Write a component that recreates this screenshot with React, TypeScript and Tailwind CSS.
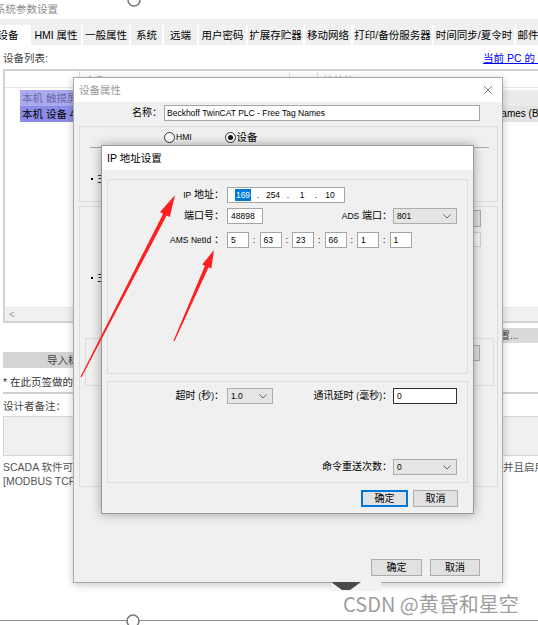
import React from "react";

const F = "font-['Liberation_Sans','Noto_Sans_CJK_SC',sans-serif]";

const TABS = [
  { t: "设备", w: "w-[42px]", sel: true },
  { t: "HMI 属性", w: "w-[52px]" },
  { t: "一般属性", w: "w-[48px]" },
  { t: "系统", w: "w-[33px]" },
  { t: "远端", w: "w-[35px]" },
  { t: "用户密码", w: "w-[49px]" },
  { t: "扩展存贮器", w: "w-[57px]" },
  { t: "移动网络", w: "w-[48px]" },
  { t: "打印/备份服务器", w: "w-[81px]" },
  { t: "时间同步/夏令时", w: "w-[82px]" },
  { t: "邮件", w: "w-[26px]" },
];

function Chevron() {
  return (
    <svg width="8" height="5" viewBox="0 0 8 5" className="shrink-0">
      <path d="M0.5 0.5 L4 4 L7.5 0.5" fill="none" stroke="#666" strokeWidth="1" />
    </svg>
  );
}

function Combo({ value, w }: { value: string; w: string }) {
  return (
    <div
      className={`${w} h-[16px] shrink-0 flex items-center justify-between border border-[#adadad] bg-[#e5e5e5] pl-[3px] pr-[5px] text-[8.5px] leading-none`}
    >
      <span>{value}</span>
      <Chevron />
    </div>
  );
}

function TextBox({ value, w, dark }: { value: string; w: string; dark?: boolean }) {
  return (
    <div
      className={`${w} h-[16px] shrink-0 flex items-center bg-white pl-[3px] text-[8.5px] leading-none ${
        dark ? "border border-[#333]" : "border border-[#a5a5a5]"
      }`}
    >
      {value}
    </div>
  );
}

function Btn({ label, focus, w }: { label: string; focus?: boolean; w: string }) {
  return (
    <div
      className={`${w} h-[17px] flex items-center justify-center bg-[#e1e1e1] text-[10px] leading-none ${
        focus ? "border-2 border-[#0078d7]" : "border border-[#adadad]"
      }`}
    >
      {label}
    </div>
  );
}

function Background() {
  return (
    <div className="flex flex-col">
      <div className="h-[19px] -ml-[5px] flex items-center text-[10.5px] text-[#8c8c8c] leading-none">
        系统参数设置
      </div>
      <div className="h-[26px] bg-[#f0f0f0] flex items-end overflow-hidden">
        <div className="flex -ml-[13px] shrink-0">
          {TABS.map((t) => (
            <div
              key={t.t}
              className={`${t.w} h-[20px] shrink-0 flex items-center justify-center text-[10.5px] leading-none whitespace-nowrap ${
                t.sel ? "bg-white" : "bg-[#f0f0f0] border-l-2 border-white"
              }`}
            >
              {t.t}
            </div>
          ))}
        </div>
      </div>
      <div className="pl-[3px] flex flex-col">
        <div className="h-[24px] pt-[3px] grid grid-cols-[480px_auto] items-center text-[10.5px] leading-none">
          <span className="text-[#444]">设备列表:</span>
          <span className="text-[#0000ff] underline whitespace-nowrap">当前 PC 的 IP 地址</span>
        </div>
        <div className="w-[560px] h-[254px] border-2 border-[#d2d2d2] flex flex-col">
          <div className="h-[17px] flex text-[10px] leading-none text-[#777] border-b border-[#e5e5e5]">
            <div className="w-[75px] shrink-0 border-r border-[#e0e0e0]" />
            <div className="w-[210px] shrink-0 border-r border-[#e0e0e0] pl-[6px] pt-[6px]">名称</div>
            <div className="w-[28px] shrink-0 border-r border-[#e0e0e0] pl-[4px] pt-[6px]">No.</div>
            <div className="flex-1 pl-[6px] pt-[6px]">连接端口</div>
          </div>
          <div className="mt-[2px] h-[16px] flex text-[10.5px] leading-none">
            <div className="w-[15px] shrink-0" />
            <div className="w-[60px] shrink-0 bg-[#aaaaf0] text-[#6a6aa8] pl-[2px] flex items-center whitespace-nowrap">
              本机 触摸屏
            </div>
            <div className="flex-1 bg-[#ebebeb]" />
          </div>
          <div className="h-[16px] flex text-[10.5px] leading-none">
            <div className="w-[15px] shrink-0" />
            <div className="w-[60px] shrink-0 bg-[#8c8ce8] pl-[2px] flex items-center whitespace-nowrap overflow-hidden">
              本机 设备 4
            </div>
            <div className="w-[238px] shrink-0 bg-[#e3e3e3]" />
            <div className="flex-1 min-w-0 overflow-hidden bg-[#e3e3e3] pl-[22px] flex items-center text-[10px] whitespace-nowrap">
              Beckhoff TwinCAT PLC - Free Tag Names (Beckhoff)
            </div>
          </div>
          <div className="flex-1" />
          <div className="h-[14px] bg-[#f0f0f0] border-t border-[#e6e6e6] flex items-center pl-[4px] text-[10px] text-[#a0a0a0] leading-none">
            &lt;
          </div>
        </div>
        <div className="mt-[5px] ml-[437px] w-[140px] h-[15px] bg-[#dadada] pl-[50px] text-[10px] text-[#444] flex items-center whitespace-nowrap leading-none">
          设置...
        </div>
        <div className="mt-[9px] w-[260px] h-[16px] bg-[#d4d4d4] pl-[44px] text-[10.5px] text-[#444] flex items-center leading-none">
          导入标签
        </div>
        <div className="mt-[7px] h-[14px] flex items-center text-[10.5px] text-[#333] whitespace-nowrap leading-none">
          * 在此页签做的修改仅对当前设备有效
        </div>
        <div className="mt-[3px] h-[2px] w-[560px] bg-[#d0d0d0]" />
        <div className="mt-[5px] h-[14px] flex items-center text-[10.5px] text-[#444] leading-none">
          设计者备注：
        </div>
        <div className="mt-[3px] h-[40px] w-[560px] border border-[#d4d4d4] bg-[#f0f0f0]" />
        <div className="mt-[4px] h-[14px] grid grid-cols-[500px_auto] items-center text-[10.5px] text-[#555] leading-none whitespace-nowrap">
          <span className="overflow-hidden">SCADA 软件可以通过 MODBUS 协议读取本机数据，</span>
          <span>并且启用</span>
        </div>
        <div className="h-[14px] flex items-center text-[10.5px] text-[#555] leading-none whitespace-nowrap">
          [MODBUS TCP/IP] 服务器
        </div>
      </div>
    </div>
  );
}

function Radio({ on }: { on?: boolean }) {
  return (
    <div className="w-[11px] h-[11px] rounded-full border border-[#333] bg-white flex items-center justify-center shrink-0">
      {on && <div className="w-[5px] h-[5px] rounded-full bg-[#111]" />}
    </div>
  );
}

function DeviceDialog() {
  return (
    <div className="absolute left-[73px] top-[77px] w-[430px] h-[506px] flex flex-col border border-[#a8a8a8] bg-[#f0f0f0] shadow-[0_2px_8px_rgba(0,0,0,0.22)]">
      <div className="h-[24px] bg-white flex items-center justify-between pl-[5px] pr-[9px]">
        <span className="text-[10.5px] text-[#999] leading-none">设备属性</span>
        <svg width="10" height="10" viewBox="0 0 10 10">
          <path d="M1 1 L9 9 M9 1 L1 9" stroke="#777" strokeWidth="1" />
        </svg>
      </div>
      <div className="flex-1 flex flex-col">
        <div className="mt-[3px] flex items-center h-[16px]">
          <div className="w-[88px] text-right text-[10px] leading-none">名称：</div>
          <div className="ml-[2px] w-[316px] h-[16px] border border-[#a5a5a5] bg-white pl-[2px] flex items-center text-[8.5px] leading-none whitespace-nowrap">
            Beckhoff TwinCAT PLC - Free Tag Names
          </div>
        </div>
        <div className="mt-[5px] ml-[5px] w-[419px] h-[76px] border border-[#dcdcdc] flex flex-col">
          <div className="mt-[4px] h-[12px] flex items-center text-[10.5px] leading-none">
            <div className="ml-[84px]">
              <Radio />
            </div>
            <span className="ml-[1px] text-[8.5px]">HMI</span>
            <div className="ml-[33px]">
              <Radio on />
            </div>
            <span className="ml-[1px]">设备</span>
          </div>
          <div className="mt-[4px] ml-[10px] mr-[8px] h-[1px] bg-[#a8a8a8]" />
          <div className="mt-[26px] ml-[11px] flex items-center text-[10px] leading-none">
            <div className="w-[2px] h-[2px] bg-black" />
            <span className="ml-[4px]">主</span>
          </div>
        </div>
        <div className="mt-[4px] ml-[5px] w-[419px] h-[281px] border border-[#dcdcdc] flex flex-col">
          <div className="mt-[3px] mr-[16px] self-end w-[100px] h-[17px] border border-[#adadad] bg-[#e1e1e1]" />
          <div className="mt-[5px] mr-[16px] self-end w-[100px] h-[15px] border border-[#d0d0d0] bg-[#f7f7f7]" />
          <div className="mt-[26px] ml-[11px] flex items-center text-[10px] leading-none">
            <div className="w-[2px] h-[2px] bg-black" />
            <span className="ml-[4px]">主</span>
          </div>
          <div className="mt-[55px] ml-[5px] mr-[3px] h-[48px] border border-[#dcdcdc] flex items-start justify-end">
            <div className="mt-[6px] mr-[13px] w-[60px] h-[16px] border border-[#adadad] bg-[#e1e1e1]" />
          </div>
        </div>
        <div className="mt-[72px] flex justify-end gap-[8px] pr-[22px]">
          <Btn label="确定" w="w-[51px]" />
          <Btn label="取消" w="w-[50px]" />
        </div>
      </div>
    </div>
  );
}

function Lat({ children }: { children: React.ReactNode }) {
  return <span className="text-[8.5px]">{children}</span>;
}

function IpDialog() {
  const ams = ["5", "63", "23", "66", "1", "1"];
  return (
    <div className="absolute left-[101px] top-[145px] w-[373px] h-[369px] flex flex-col border border-[#9a9a9a] bg-[#f0f0f0] shadow-[0_0_10px_rgba(0,0,0,0.35)]">
      <div className="h-[24px] bg-white pl-[5px] flex items-center text-[10.5px] leading-none">IP 地址设置</div>
      <div className="flex-1 px-[5px] pt-[9px] flex flex-col text-[10px] leading-none">
        <div className="h-[195px] border border-[#dcdcdc] pt-[7px] pr-[10px] flex flex-col">
          <div className="h-[16px] flex items-center">
            <div className="w-[117px] text-right pr-[1px]">
              <Lat>IP</Lat> 地址：
            </div>
            <div className="ml-[2px] w-[118px] h-[16px] border border-[#a5a5a5] bg-white flex items-center text-[8.5px] pl-[3px]">
              <div className="w-[24px] flex justify-center">
                <span className="bg-[#0078d7] text-white px-[1px] py-[2px]">169</span>
              </div>
              <div className="w-[6px] text-center">.</div>
              <div className="w-[24px] text-center">254</div>
              <div className="w-[6px] text-center">.</div>
              <div className="w-[22px] text-center">1</div>
              <div className="w-[6px] text-center">.</div>
              <div className="w-[22px] text-center">10</div>
            </div>
          </div>
          <div className="mt-[5px] h-[16px] flex items-center">
            <div className="w-[117px] text-right pr-[1px]">端口号：</div>
            <div className="ml-[2px]">
              <TextBox value="48898" w="w-[36px]" />
            </div>
            <div className="ml-auto pr-[1px]">
              <Lat>ADS</Lat> 端口：
            </div>
            <Combo value="801" w="w-[64px]" />
          </div>
          <div className="mt-[8px] h-[16px] flex items-center">
            <div className="w-[117px] text-right pr-[1px]">
              <Lat>AMS NetId</Lat> ：
            </div>
            <div className="ml-[2px] flex items-center">
              {ams.map((v, i) => (
                <React.Fragment key={i}>
                  {i > 0 && <div className="w-[10.5px] text-center text-[8.5px]">:</div>}
                  <TextBox value={v} w="w-[22px]" />
                </React.Fragment>
              ))}
            </div>
          </div>
        </div>
        <div className="mt-[7px] h-[102px] border border-[#dcdcdc] pt-[6px] pr-[10px] flex flex-col">
          <div className="h-[16px] flex items-center">
            <div className="w-[117px] text-right pr-[1px]">
              超时 <Lat>(</Lat>秒<Lat>)</Lat>：
            </div>
            <div className="ml-[2px]">
              <Combo value="1.0" w="w-[46px]" />
            </div>
            <div className="ml-auto pr-[1px]">
              通讯延时 <Lat>(</Lat>毫秒<Lat>)</Lat>：
            </div>
            <TextBox value="0" w="w-[64px]" dark />
          </div>
          <div className="mt-[55px] h-[16px] flex items-center justify-end">
            <div className="pr-[1px]">命令重送次数：</div>
            <Combo value="0" w="w-[64px]" />
          </div>
        </div>
        <div className="mt-[7px] flex justify-end gap-[5px] pr-[10px]">
          <Btn label="确定" w="w-[47px]" focus />
          <Btn label="取消" w="w-[45px]" />
        </div>
      </div>
    </div>
  );
}

function arrowPoints(t: [number, number], p: [number, number], hl: number, hw: number) {
  const dx = p[0] - t[0];
  const dy = p[1] - t[1];
  const L = Math.hypot(dx, dy);
  const ux = dx / L;
  const uy = dy / L;
  const nx = -uy;
  const ny = ux;
  const w0 = 1.2;
  const w1 = 4;
  const bx = p[0] - ux * hl;
  const by = p[1] - uy * hl;
  const pts: [number, number][] = [
    [t[0] + (nx * w0) / 2, t[1] + (ny * w0) / 2],
    [bx + (nx * w1) / 2, by + (ny * w1) / 2],
    [bx + (nx * hw) / 2, by + (ny * hw) / 2],
    p,
    [bx - (nx * hw) / 2, by - (ny * hw) / 2],
    [bx - (nx * w1) / 2, by - (ny * w1) / 2],
    [t[0] - (nx * w0) / 2, t[1] - (ny * w0) / 2],
  ];
  return pts.map((q) => q.join(",")).join(" ");
}

function Overlay() {
  return (
    <>
      <svg className="absolute left-0 top-0 pointer-events-none" width="538" height="625" viewBox="0 0 538 625">
        <circle cx="134" cy="0" r="6" fill="#fff" stroke="#777" strokeWidth="1.5" />
        <rect x="331" y="582" width="50" height="9" fill="#f2f2f2" />
        <polygon points="331,582 361,582 350,590 342,590" fill="#4a4a4a" />
        <line x1="0" y1="620.5" x2="538" y2="620.5" stroke="#8a8a8a" strokeWidth="1" />
        <circle cx="133" cy="621" r="6" fill="#fff" stroke="#777" strokeWidth="1.5" />
        <polygon points={arrowPoints([81, 377], [175, 195], 22, 11)} fill="#ff1f1f" />
        <polygon points={arrowPoints([174, 341], [214, 250], 18, 10)} fill="#ff1f1f" />
      </svg>
      <div className="absolute left-[343px] top-[594px] text-[20px] leading-none text-[#9e9e9e] whitespace-nowrap font-['Noto_Sans_CJK_SC',sans-serif]">
        CSDN @黄昏和星空
      </div>
    </>
  );
}

export default function App() {
  return (
    <div className={`${F} relative w-[538px] h-[625px] overflow-hidden bg-white text-black`}>
      <Background />
      <DeviceDialog />
      <IpDialog />
      <Overlay />
    </div>
  );
}
